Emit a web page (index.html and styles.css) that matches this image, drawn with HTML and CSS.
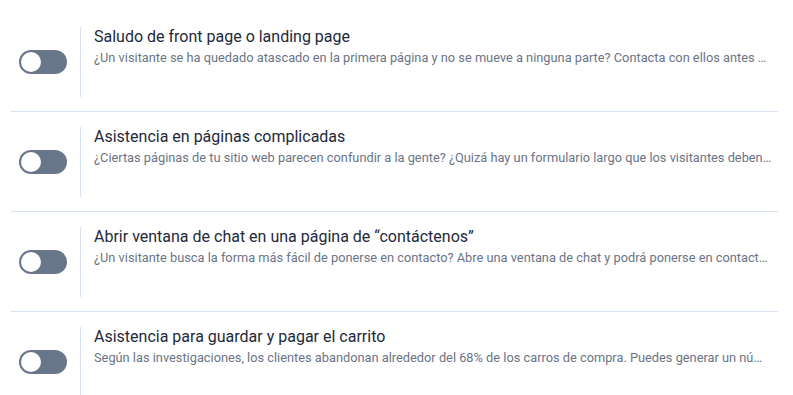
FILE: index.html
```html
<!DOCTYPE html>
<html>
<head>
	<title>Disparadores de chat</title>
	<meta name="viewport" content="width=device-width,initial-scale=1">
	<link rel="stylesheet" href="styles.css">
</head>
<body>

	<div class="list">
		<div class="row">
			<div class="switch-col"><span class="switch"><span class="knob"></span></span></div>
			<div class="info">
				<h3>Saludo de front page o landing page</h3>
				<p>¿Un visitante se ha quedado atascado en la primera página y no se mueve a ninguna parte? Contacta con ellos antes de que se vayan del sitio.</p>
			</div>
		</div>
		<div class="row">
			<div class="switch-col"><span class="switch"><span class="knob"></span></span></div>
			<div class="info">
				<h3>Asistencia en páginas complicadas</h3>
				<p>¿Ciertas páginas de tu sitio web parecen confundir a la gente? ¿Quizá hay un formulario largo que los visitantes deben rellenar?</p>
			</div>
		</div>
		<div class="row">
			<div class="switch-col"><span class="switch"><span class="knob"></span></span></div>
			<div class="info">
				<h3>Abrir ventana de chat en una página de “contáctenos”</h3>
				<p>¿Un visitante busca la forma más fácil de ponerse en contacto? Abre una ventana de chat y podrá ponerse en contacto contigo al instante.</p>
			</div>
		</div>
		<div class="row">
			<div class="switch-col"><span class="switch"><span class="knob"></span></span></div>
			<div class="info">
				<h3>Asistencia para guardar y pagar el carrito</h3>
				<p>Según las investigaciones, los clientes abandonan alrededor del 68% de los carros de compra. Puedes generar un número mayor de ventas.</p>
			</div>
		</div>
	</div>

</body>
</html>
```

FILE: styles.css
```css
*{
	box-sizing: border-box;
	padding: 0;
	margin: 0;
}

body{
	background-color: #fff;
	font-family: Roboto, "Liberation Sans", sans-serif;
	overflow: hidden;
}

.list{
	padding: 12px 15px 0 11px;
}

.row{
	display: flex;
	align-items: stretch;
	padding: 15px 0 14px;
	border-bottom: 1px solid #d5e1f1;
}
.row:last-child{
	border-bottom: none;
}

.switch-col{
	width: 69px;
	flex-shrink: 0;
	display: flex;
	align-items: center;
	padding-left: 8px;
}

.switch{
	display: flex;
	align-items: center;
	width: 48px;
	height: 24px;
	padding: 2px;
	border-radius: 12px;
	background-color: #69758a;
	cursor: pointer;
}
.switch .knob{
	width: 20px;
	height: 20px;
	border-radius: 50%;
	background-color: #fff;
}

.info{
	flex: 1;
	min-width: 0;
	height: 70px;
	border-left: 1px solid #d5e1f1;
	padding: 0 5px 0 13px;
}

.info h3{
	font-size: 16px;
	line-height: 20px;
	font-weight: 400;
	color: #1e293b;
}

.info p{
	margin-top: 2px;
	font-size: 12.8px;
	line-height: 18px;
	color: #6b7487;
	white-space: nowrap;
	overflow: hidden;
	text-overflow: ellipsis;
}
```
